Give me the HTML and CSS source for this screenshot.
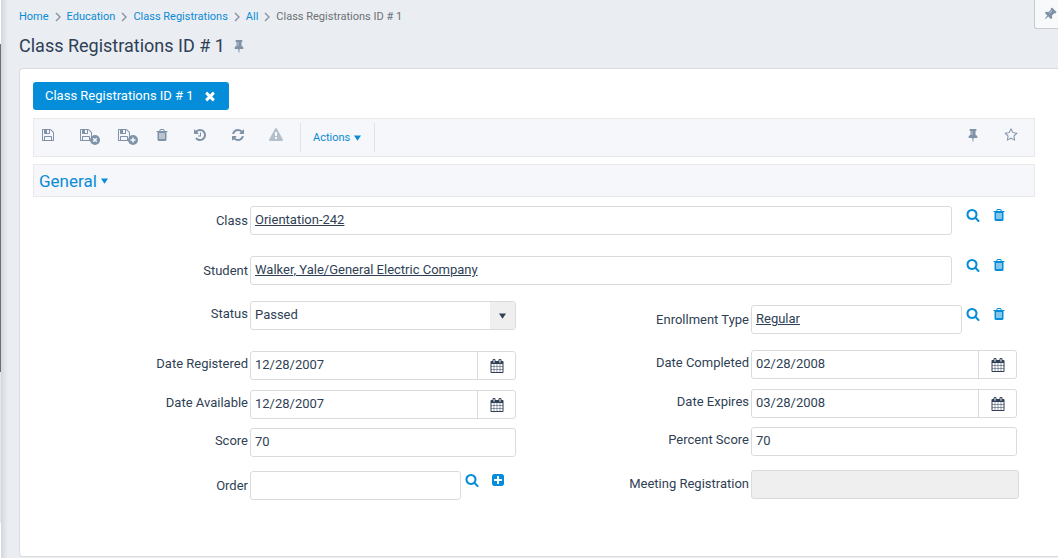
FILE: index.html
```html
<!DOCTYPE html>
<html lang="en">
<head>
<meta charset="utf-8">
<title>Class Registrations ID # 1</title>
<link rel="stylesheet" href="styles.css">
</head>
<body>
<svg class="sprite" aria-hidden="true">
  <symbol id="i-search" viewBox="0 0 1792 1792"><path d="M1216 832q0-185-131.500-316.500t-316.500-131.500-316.500 131.500-131.500 316.500 131.500 316.500 316.500 131.500 316.500-131.500 131.500-316.500zm512 832q0 52-38 90t-90 38q-54 0-90-38l-343-342q-179 124-399 124-143 0-273.500-55.500t-225-150-150-225-55.500-273.500 55.500-273.500 150-225 225-150 273.500-55.500 273.500 55.500 225 150 150 225 55.500 273.500q0 220-124 399l343 343q37 37 37 90z"/></symbol>
  <symbol id="i-trash" viewBox="0 0 1792 1792"><path d="M704 1376v-704q0-14-9-23t-23-9h-64q-14 0-23 9t-9 23v704q0 14 9 23t23 9h64q14 0 23-9t9-23zm256 0v-704q0-14-9-23t-23-9h-64q-14 0-23 9t-9 23v704q0 14 9 23t23 9h64q14 0 23-9t9-23zm256 0v-704q0-14-9-23t-23-9h-64q-14 0-23 9t-9 23v704q0 14 9 23t23 9h64q14 0 23-9t9-23zm-544-992h448l-48-117q-7-9-17-11h-317q-10 2-17 11zm928 32v64q0 14-9 23t-23 9h-96v948q0 83-47 143.500t-113 60.500h-832q-66 0-113-58.500t-47-141.500v-952h-96q-14 0-23-9t-9-23v-64q0-14 9-23t23-9h309l70-167q15-37 54-63t79-26h320q40 0 79 26t54 63l70 167h309q14 0 23 9t9 23z"/></symbol>
  <symbol id="i-calendar" viewBox="0 0 1792 1792"><path d="M192 1664h288v-288h-288v288zm352 0h320v-288h-320v288zm-352-352h288v-320h-288v320zm352 0h320v-320h-320v320zm-352-384h288v-288h-288v288zm736 736h320v-288h-320v288zm-384-736h320v-288h-320v288zm768 736h288v-288h-288v288zm-384-352h320v-320h-320v320zm-352-864v-288q0-13-9.500-22.500t-22.500-9.500h-64q-13 0-22.500 9.500t-9.500 22.500v288q0 13 9.500 22.500t22.500 9.500h64q13 0 22.500-9.500t9.500-22.500zm736 864h288v-320h-288v320zm-384-384h320v-288h-320v288zm384 0h288v-288h-288v288zm32-480v-288q0-13-9.500-22.500t-22.500-9.500h-64q-13 0-22.500 9.500t-9.500 22.500v288q0 13 9.500 22.500t22.500 9.500h64q13 0 22.500-9.500t9.500-22.500zm384-64v1280q0 52-38 90t-90 38h-1408q-52 0-90-38t-38-90v-1280q0-52 38-90t90-38h128v-96q0-66 47-113t113-47h64q66 0 113 47t47 113v96h384v-96q0-66 47-113t113-47h64q66 0 113 47t47 113v96h128q52 0 90 38t38 90z"/></symbol>
  <symbol id="i-refresh" viewBox="0 0 1792 1792"><path d="M1639 1056q0 5-1 7-64 268-268 434.500t-478 166.500q-146 0-282.500-55t-243.500-157l-129 129q-19 19-45 19t-45-19-19-45v-448q0-26 19-45t45-19h448q26 0 45 19t19 45-19 45l-137 137q71 66 161 102t187 36q134 0 250-65t186-179q11-17 53-117 8-23 30-23h192q13 0 22.500 9.500t9.500 22.500zm25-800v448q0 26-19 45t-45 19h-448q-26 0-45-19t-19-45 19-45l138-138q-148-137-349-137-134 0-250 65t-186 179q-11 17-53 117-8 23-30 23h-199q-13 0-22.500-9.500t-9.500-22.500v-7q65-268 270-434.500t480-166.500q146 0 284 55.500t245 156.500l130-129q19-19 45-19t45 19 19 45z"/></symbol>
  <symbol id="i-history" viewBox="0 0 1792 1792"><path d="M1664 896q0 156-61 298t-164 245-245 164-298 61q-172 0-327-72.500t-264-204.500q-7-10-6.500-22.500t8.500-20.500l137-138q10-9 25-9 16 2 23 12 73 95 179 147t225 52q104 0 198.500-40.500t163.500-109.500 109.500-163.500 40.500-198.500-40.500-198.500-109.500-163.500-163.500-109.500-198.500-40.500q-98 0-188 35.500t-160 101.500l137 138q31 30 14 69-17 40-59 40h-448q-26 0-45-19t-19-45v-448q0-42 40-59 39-17 69 14l130 129q107-101 244.500-156.500t284.500-55.500q156 0 298 61t245 164 164 245 61 298zm-640-288v448q0 14-9 23t-23 9h-320q-14 0-23-9t-9-23v-64q0-14 9-23t23-9h224v-352q0-14 9-23t23-9h64q14 0 23 9t9 23z"/></symbol>
  <symbol id="i-warning" viewBox="0 0 1792 1792"><path d="M1024 1375v-190q0-14-9.500-23.500t-22.500-9.500h-192q-13 0-22.500 9.500t-9.500 23.500v190q0 14 9.500 23.500t22.500 9.500h192q13 0 22.500-9.500t9.500-23.500zm-2-374l18-459q0-12-10-19-13-11-24-11h-220q-11 0-24 11-10 7-10 21l17 457q0 10 10 16.500t24 6.500h185q14 0 23.500-6.500t10.500-16.500zm-14-934l768 1408q35 63-2 126-17 29-46.500 46t-63.500 17h-1536q-34 0-63.500-17t-46.500-46q-37-63-2-126l768-1408q17-31 47-49t65-18 65 18 47 49z"/></symbol>
  <symbol id="i-pin" viewBox="0 0 1792 1792"><path d="M800 864v-448q0-14-9-23t-23-9-23 9-9 23v448q0 14 9 23t23 9 23-9 9-23zm672 352q0 26-19 45t-45 19h-429l-51 483q-2 12-10.500 20.500t-20.500 8.500h-1q-27 0-32-27l-76-485h-404q-26 0-45-19t-19-45q0-123 78.500-221.500t177.500-98.500v-512q-52 0-90-38t-38-90 38-90 90-38h640q52 0 90 38t38 90-38 90-90 38v512q99 0 177.500 98.500t78.500 221.500z"/></symbol>
  <symbol id="i-star" viewBox="0 0 1792 1792"><path d="M1201 1004l306-297-422-62-189-382-189 382-422 62 306 297-73 421 378-199 377 199zm527-357q0 22-26 48l-363 354 86 500q1 7 1 20 0 50-41 50-19 0-40-12l-449-236-449 236q-22 12-40 12-21 0-31.500-14.500t-10.500-35.500q0-6 2-20l86-500-364-354q-25-27-25-48 0-37 56-46l502-73 225-455q19-41 49-41t49 41l225 455 502 73q56 9 56 46z"/></symbol>
  <symbol id="i-save" viewBox="0 0 1792 1792"><path d="M512 1536h768v-384h-768v384zm896 0h128v-896q0-14-10-38.500t-20-34.500l-281-281q-10-10-34-20t-39-10v416q0 40-28 68t-68 28h-576q-40 0-68-28t-28-68v-416h-128v1280h128v-416q0-40 28-68t68-28h832q40 0 68 28t28 68v416zm-384-928v-320q0-13-9.500-22.500t-22.500-9.500h-192q-13 0-22.500 9.500t-9.500 22.500v320q0 13 9.500 22.500t22.500 9.500h192q13 0 22.500-9.500t9.500-22.500zm640 32v928q0 40-28 68t-68 28h-1344q-40 0-68-28t-28-68v-1344q0-40 28-68t68-28h928q40 0 88 20t76 48l280 280q28 28 48 76t20 88z"/></symbol>
  <symbol id="i-times" viewBox="0 0 1792 1792"><path d="M1490 1322q0 40-28 68l-136 136q-28 28-68 28t-68-28l-294-294-294 294q-28 28-68 28t-68-28l-136-136q-28-28-28-68t28-68l294-294-294-294q-28-28-28-68t28-68l136-136q28-28 68-28t68 28l294 294 294-294q28-28 68-28t68 28l136 136q28 28 28 68t-28 68l-294 294 294 294q28 28 28 68z"/></symbol>
  <symbol id="i-plus" viewBox="0 0 1792 1792"><path d="M1408 960v-128q0-26-19-45t-45-19h-320v-320q0-26-19-45t-45-19h-128q-26 0-45 19t-19 45v320h-320q-26 0-45 19t-19 45v128q0 26 19 45t45 19h320v320q0 26 19 45t45 19h128q26 0 45-19t19-45v-320h320q26 0 45-19t19-45zm256-544v960q0 119-84.500 203.500t-203.500 84.500h-960q-119 0-203.500-84.500t-84.500-203.500v-960q0-119 84.500-203.500t203.500-84.500h960q119 0 203.500 84.500t84.500 203.500z"/></symbol>
  <symbol id="i-badge-close" viewBox="0 0 10 10"><circle cx="5" cy="5" r="5"/><path d="M3.200 3.200l3.600 3.600M6.800 3.200l-3.600 3.600" stroke="#f5f7fa" stroke-width="1.500"/></symbol>
  <symbol id="i-badge-plus" viewBox="0 0 10 10"><circle cx="5" cy="5" r="5"/><path d="M5 2.400v5.200M2.400 5h5.200" stroke="#f5f7fa" stroke-width="1.500"/></symbol>
  <symbol id="i-chevron" viewBox="0 0 6 10"><path d="M1 1l4 4-4 4" fill="none" stroke="currentColor" stroke-width="1.400"/></symbol>
  <symbol id="i-caret" viewBox="0 0 8 6"><path d="M0 0h8L4 6z"/></symbol>
</svg>

<div class="layout">
  <div class="rail" aria-hidden="true"></div>
  <main class="page">
    <nav class="breadcrumb" aria-label="Breadcrumb">
      <a href="#">Home</a><svg class="chevron"><use href="#i-chevron"/></svg>
      <a href="#">Education</a><svg class="chevron"><use href="#i-chevron"/></svg>
      <a href="#">Class Registrations</a><svg class="chevron"><use href="#i-chevron"/></svg>
      <a href="#">All</a><svg class="chevron"><use href="#i-chevron"/></svg>
      <span>Class Registrations ID # 1</span>
    </nav>
    <header class="heading">
      <h1>Class Registrations ID # 1</h1>
      <button class="icon-btn muted" aria-label="Pin page"><svg class="icon"><use href="#i-pin"/></svg></button>
    </header>

    <section class="card">
      <div class="tab">
        <span>Class Registrations ID # 1</span>
        <button class="icon-btn" aria-label="Close tab"><svg class="icon"><use href="#i-times"/></svg></button>
      </div>

      <div class="toolbar">
        <div class="tools">
          <button class="icon-btn" aria-label="Save"><svg class="icon"><use href="#i-save"/></svg></button>
          <button class="icon-btn" aria-label="Save and close"><svg class="icon"><use href="#i-save"/></svg><svg class="badge"><use href="#i-badge-close"/></svg></button>
          <button class="icon-btn" aria-label="Save and new"><svg class="icon"><use href="#i-save"/></svg><svg class="badge"><use href="#i-badge-plus"/></svg></button>
          <button class="icon-btn" aria-label="Delete"><svg class="icon"><use href="#i-trash"/></svg></button>
          <button class="icon-btn" aria-label="History"><svg class="icon"><use href="#i-history"/></svg></button>
          <button class="icon-btn" aria-label="Refresh"><svg class="icon"><use href="#i-refresh"/></svg></button>
          <button class="icon-btn" aria-label="Warnings" disabled><svg class="icon"><use href="#i-warning"/></svg></button>
        </div>
        <button class="actions">Actions <svg class="caret"><use href="#i-caret"/></svg></button>
        <div class="tools tools-end">
          <button class="icon-btn" aria-label="Pin record"><svg class="icon"><use href="#i-pin"/></svg></button>
          <button class="icon-btn" aria-label="Favorite"><svg class="icon"><use href="#i-star"/></svg></button>
        </div>
      </div>

      <h2 class="section"><button class="section-toggle">General <svg class="caret"><use href="#i-caret"/></svg></button></h2>

      <form class="form">
        <div class="field lookup wide">
          <label for="class">Class</label>
          <output class="box" id="class"><a href="#">Orientation-242</a></output>
          <div class="links">
            <button type="button" class="icon-btn" aria-label="Find class"><svg class="icon"><use href="#i-search"/></svg></button>
            <button type="button" class="icon-btn" aria-label="Clear class"><svg class="icon"><use href="#i-trash"/></svg></button>
          </div>
        </div>
        <div class="field lookup wide">
          <label for="student">Student</label>
          <output class="box" id="student"><a href="#">Walker, Yale/General Electric Company</a></output>
          <div class="links">
            <button type="button" class="icon-btn" aria-label="Find student"><svg class="icon"><use href="#i-search"/></svg></button>
            <button type="button" class="icon-btn" aria-label="Clear student"><svg class="icon"><use href="#i-trash"/></svg></button>
          </div>
        </div>

        <div class="columns">
          <div class="column column-start">
            <div class="field">
              <label for="status">Status</label>
              <div class="select-wrap">
                <select class="box" id="status"><option>Passed</option></select>
                <span class="select-arrow"><svg class="caret"><use href="#i-caret"/></svg></span>
              </div>
            </div>
            <div class="field">
              <label for="registered">Date Registered</label>
              <div class="box date"><input id="registered" value="12/28/2007"><button type="button" aria-label="Choose date registered"><svg class="icon"><use href="#i-calendar"/></svg></button></div>
            </div>
            <div class="field">
              <label for="available">Date Available</label>
              <div class="box date"><input id="available" value="12/28/2007"><button type="button" aria-label="Choose date available"><svg class="icon"><use href="#i-calendar"/></svg></button></div>
            </div>
            <div class="field">
              <label for="score">Score</label>
              <input class="box" id="score" value="70">
            </div>
            <div class="field lookup">
              <label for="order">Order</label>
              <input class="box" id="order">
              <div class="links">
                <button type="button" class="icon-btn" aria-label="Find order"><svg class="icon"><use href="#i-search"/></svg></button>
                <button type="button" class="icon-btn" aria-label="Add order"><svg class="icon"><use href="#i-plus"/></svg></button>
              </div>
            </div>
          </div>

          <div class="column column-end">
            <div class="field lookup">
              <label for="enrollment">Enrollment Type</label>
              <output class="box" id="enrollment"><a href="#">Regular</a></output>
              <div class="links">
                <button type="button" class="icon-btn" aria-label="Find enrollment type"><svg class="icon"><use href="#i-search"/></svg></button>
                <button type="button" class="icon-btn" aria-label="Clear enrollment type"><svg class="icon"><use href="#i-trash"/></svg></button>
              </div>
            </div>
            <div class="field">
              <label for="completed">Date Completed</label>
              <div class="box date"><input id="completed" value="02/28/2008"><button type="button" aria-label="Choose date completed"><svg class="icon"><use href="#i-calendar"/></svg></button></div>
            </div>
            <div class="field">
              <label for="expires">Date Expires</label>
              <div class="box date"><input id="expires" value="03/28/2008"><button type="button" aria-label="Choose date expires"><svg class="icon"><use href="#i-calendar"/></svg></button></div>
            </div>
            <div class="field">
              <label for="percent">Percent Score</label>
              <input class="box" id="percent" value="70">
            </div>
            <div class="field readonly">
              <label for="meeting">Meeting Registration</label>
              <input class="box" id="meeting" disabled>
            </div>
          </div>
        </div>
      </form>
    </section>
  </main>
</div>
<button class="dock" aria-label="Pin panel"><svg class="icon"><use href="#i-pin"/></svg></button>
</body>
</html>
```
FILE: styles.css
```css
* { box-sizing: border-box; }

body {
  margin: 0;
  background: #eaedf2;
  color: #2f3f55;
  font-family: Roboto, "Liberation Sans", sans-serif;
  font-size: 13px;
  line-height: 16px;
}

a { color: #0a8bd6; text-decoration: none; }
button, input, select { font: inherit; color: inherit; }
button { padding: 0; border: 0; background: none; cursor: pointer; }
h1, h2 { margin: 0; font-weight: 400; }

.sprite { position: absolute; width: 0; height: 0; }
.icon { display: block; width: 14px; height: 14px; fill: currentColor; }
.icon-btn { position: relative; display: block; }
.caret { width: 7px; height: 6px; fill: currentColor; }
.muted { color: #7f92a8; }

.layout { display: flex; min-height: 100vh; }
.rail {
  flex: none;
  width: 1px;
  background: linear-gradient(#fff 44px, #6f6d70 44px, #6f6d70 372px, #e6e6e6 372px, #e6e6e6 523px, #fff 523px);
}
.page {
  flex: 1;
  min-width: 0;
  padding: 9px 0 1px 18px;
  background: linear-gradient(90deg, #d5d8db, #eaedf2 7px);
}

.breadcrumb {
  display: flex;
  align-items: center;
  gap: 6px;
  font-size: 11px;
  color: #6d7175;
}
.chevron { width: 6px; height: 10px; color: #8593a3; }

.heading { display: flex; align-items: center; gap: 7px; padding: 9px 0 11px; }
.heading h1 { font-size: 18px; line-height: 23px; }

.card {
  padding: 13px 23px 56px 13px;
  background: #fff;
  border: 1px solid #d9dbde;
  border-right: 0;
  border-radius: 4px 0 0 4px;
}

.tab {
  display: inline-flex;
  align-items: center;
  gap: 9px;
  height: 28px;
  padding: 0 12px;
  border-radius: 3px;
  background: #058dd9;
  color: #fff;
  vertical-align: top;
}

.toolbar {
  display: flex;
  align-items: center;
  height: 39px;
  margin-top: 8px;
  padding: 0 16px 0 7px;
  background: #f5f7fa;
  border: 1px solid #e9e9ea;
}
.tools { display: flex; gap: 24px; padding-bottom: 6px; color: #7f92a8; }
.tools-end { margin-left: auto; }
.tools button:disabled { color: #b3bfcb; }
.badge {
  position: absolute;
  left: 11px;
  top: 7px;
  width: 10px;
  height: 10px;
  fill: currentColor;
}
.actions {
  display: flex;
  align-items: center;
  gap: 4px;
  height: 29px;
  margin-left: 17px;
  padding: 0 13px 0 12px;
  border: solid #dfe2e6;
  border-width: 0 1px;
  color: #0a8bd6;
  font-size: 11px;
}

.section {
  margin-top: 7px;
  padding: 0 5px;
  background: #f5f7fa;
  border: 1px solid #e9e9ea;
}
.section-toggle {
  display: flex;
  align-items: center;
  gap: 4px;
  height: 31px;
  color: #0a8bd6;
  font-size: 17px;
}

.form { padding-top: 9px; }
.wide { margin-bottom: 21px; }
.columns { display: grid; grid-template-columns: 1fr 1fr; margin-top: -5px; }
.column { display: flex; flex-direction: column; gap: 9px; }
.column-end { padding-top: 4px; }
.column .field:first-child { margin-bottom: 7px; }
.column-start .field:first-child { margin-bottom: 12px; }
.column .field:nth-child(2) { margin-bottom: 1px; }
.column .field:last-child { margin-top: 5px; }

.field {
  display: grid;
  grid-template-columns: 215px 1fr;
  column-gap: 2px;
  align-items: center;
  padding-right: 18px;
}
.field label { padding-bottom: 3px; text-align: right; }
.field.readonly { padding-right: 16px; }
.field.readonly label { padding-bottom: 2px; }
.field.lookup { grid-template-columns: 215px 1fr auto; padding-right: 29px; }
.field.lookup label { padding-bottom: 0; }
.box {
  display: block;
  width: 100%;
  min-width: 0;
  height: 29px;
  padding: 0 4px 2px;
  background: #fff;
  border: 1px solid #d9dbdd;
  border-radius: 3px;
}
output.box { line-height: 25px; }
output.box a { color: inherit; text-decoration: underline; }
.box:disabled { background: #efefef; }

.links {
  display: flex;
  gap: 12px;
  align-self: start;
  padding: 2px 0 0 2px;
  color: #058dd9;
}
.wide .links { padding-left: 12px; }

.select-wrap { position: relative; }
.select-wrap select { appearance: none; }
.select-arrow {
  position: absolute;
  inset: 1px 1px 1px auto;
  display: grid;
  place-items: center;
  width: 25px;
  background: #efefef;
  pointer-events: none;
}

.date { display: flex; padding: 0; }
.date input {
  flex: 1;
  min-width: 0;
  padding: 0 4px 2px;
  border: 0;
  background: none;
}
.date button {
  display: grid;
  place-items: center;
  width: 38px;
  border-left: 1px solid #d9dbdd;
}

.dock {
  position: absolute;
  top: 0;
  right: 0;
  width: 24px;
  height: 29px;
  padding-left: 8px;
  background: #f8f9fb;
  border: solid #c9cbcf;
  border-width: 0 0 1px 1px;
  border-radius: 0 0 0 3px;
  color: #7f92a8;
}
.dock .icon { transform: rotate(45deg); }
```
